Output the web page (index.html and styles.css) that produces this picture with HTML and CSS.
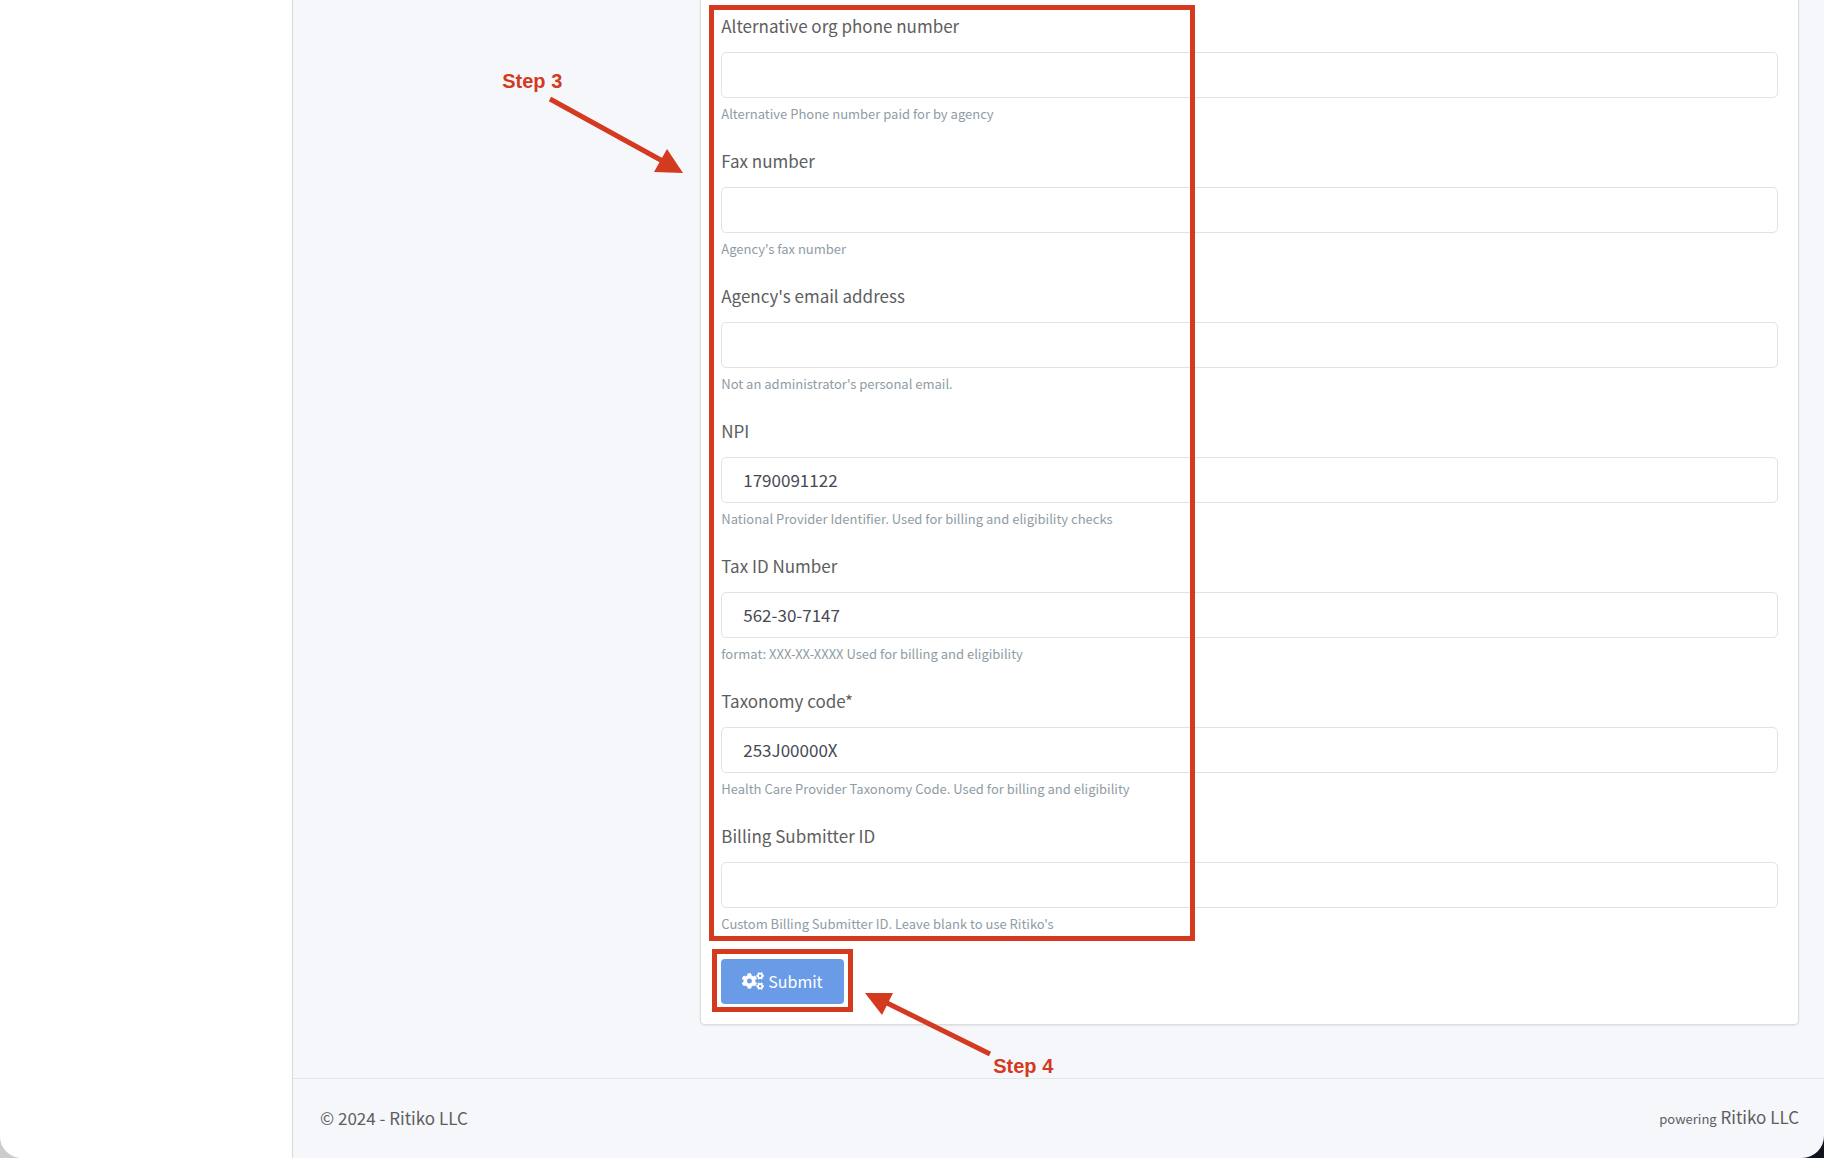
FILE: index.html
```html
<!DOCTYPE html>
<html lang="en">
  <head>
    <meta charset="UTF-8" />
    <meta name="viewport" content="width=device-width, initial-scale=1.0" />
    <title>Agency settings</title>
    <link rel="stylesheet" href="styles.css">
  </head>
  <body>
    <div class="page">
      <aside class="sidebar"></aside>

      <div class="content">
        <main class="main">
          <form class="card">
            <div class="field">
              <label for="altPhone">Alternative org phone number</label>
              <input type="text" id="altPhone" />
              <small>Alternative Phone number paid for by agency</small>
            </div>

            <div class="field">
              <label for="fax">Fax number</label>
              <input type="text" id="fax" />
              <small>Agency's fax number</small>
            </div>

            <div class="field">
              <label for="email">Agency's email address</label>
              <input type="text" id="email" />
              <small>Not an administrator's personal email.</small>
            </div>

            <div class="field">
              <label for="npi">NPI</label>
              <input type="text" id="npi" value="1790091122" />
              <small>National Provider Identifier. Used for billing and eligibility checks</small>
            </div>

            <div class="field">
              <label for="taxId">Tax ID Number</label>
              <input type="text" id="taxId" value="562-30-7147" />
              <small>format: XXX-XX-XXXX Used for billing and eligibility</small>
            </div>

            <div class="field">
              <label for="taxonomy">Taxonomy code*</label>
              <input type="text" id="taxonomy" value="253J00000X" />
              <small>Health Care Provider Taxonomy Code. Used for billing and eligibility</small>
            </div>

            <div class="field">
              <label for="submitter">Billing Submitter ID</label>
              <input type="text" id="submitter" />
              <small>Custom Billing Submitter ID. Leave blank to use Ritiko's</small>
            </div>

            <button type="submit" class="submit">
              <svg class="icon" viewBox="0 0 640 512" aria-hidden="true">
                <defs>
                  <path id="smallCog" d="M512.1 191l-8.2 14.3c-3 5.3-9.4 7.5-15.1 5.4-11.8-4.4-22.6-10.7-32.1-18.6-4.6-3.8-5.8-10.5-2.8-15.7l8.2-14.3c-6.9-8-12.3-17.3-15.9-27.4h-16.5c-6 0-11.2-4.3-12.2-10.3-2-12-2.1-24.6 0-37.1 1-6 6.2-10.4 12.2-10.4h16.5c3.6-10.1 9-19.4 15.9-27.4l-8.2-14.3c-3-5.2-1.9-11.9 2.8-15.7 9.5-7.9 20.4-14.2 32.1-18.6 5.7-2.1 12.1.1 15.1 5.4l8.2 14.3c10.5-1.9 21.2-1.9 31.7 0L552 6.3c3-5.3 9.4-7.5 15.1-5.4 11.8 4.4 22.6 10.7 32.1 18.6 4.6 3.8 5.8 10.5 2.8 15.7l-8.2 14.3c6.9 8 12.3 17.3 15.9 27.4h16.5c6 0 11.2 4.3 12.2 10.3 2 12 2.1 24.6 0 37.1-1 6-6.2 10.4-12.2 10.4h-16.5c-3.6 10.1-9 19.4-15.9 27.4l8.2 14.3c3 5.2 1.9 11.9-2.8 15.7-9.5 7.9-20.4 14.2-32.1 18.6-5.7 2.1-12.1-.1-15.1-5.4l-8.2-14.3c-10.4 1.9-21.2 1.9-31.7 0zm-10.5-58.8c38.5 29.6 82.4-14.3 52.8-52.8-38.5-29.7-82.4 14.3-52.8 52.8z" />
                </defs>
                <use href="#smallCog" />
                <use href="#smallCog" y="300" />
                <path d="M386.3 286.1l33.7 16.8c10.1 5.8 14.5 18.1 10.5 29.1-8.9 24.2-26.4 46.4-42.6 65.8-7.4 8.9-20.2 11.1-30.3 5.3l-29.1-16.8c-16 13.7-34.6 24.6-54.9 31.7v33.6c0 11.6-8.3 21.6-19.7 23.6-24.6 4.2-50.4 4.4-75.9 0-11.5-2-20-11.9-20-23.6V418c-20.3-7.2-38.9-18-54.9-31.7L74 403c-10 5.8-22.9 3.6-30.3-5.3-16.2-19.4-33.3-41.6-42.2-65.7-4-10.9.4-23.2 10.5-29.1l33.3-16.8c-3.9-20.9-3.9-42.4 0-63.4L12 205.8c-10.1-5.8-14.6-18.1-10.5-29 8.9-24.2 26-46.4 42.2-65.8 7.4-8.9 20.2-11.1 30.3-5.3l29.1 16.8c16-13.7 34.6-24.6 54.9-31.7V57.1c0-11.5 8.2-21.5 19.6-23.5 24.6-4.2 50.5-4.4 76-.1 11.5 2 20 11.9 20 23.6v33.6c20.3 7.2 38.9 18 54.9 31.7l29.1-16.8c10-5.8 22.9-3.6 30.3 5.3 16.2 19.4 33.2 41.6 42.1 65.8 4 10.9.1 23.2-10 29.1l-33.7 16.8c3.9 21 3.9 42.5 0 63.5zm-117.6 21.1c59.2-77-28.7-164.9-105.7-105.7-59.2 77 28.7 164.9 105.7 105.7z" />
              </svg>
              Submit
            </button>

            <!-- step annotations drawn over the form -->
            <div class="mark mark-fields"></div>
            <div class="mark mark-submit"></div>

            <span class="step step-three">Step 3</span>
            <svg class="arrow arrow-three" viewBox="0 0 136 80" aria-hidden="true">
              <path class="line" d="M2 4L120 69" />
              <path class="head" d="M135 78L119 54L106 77z" />
            </svg>

            <span class="step step-four">Step 4</span>
            <svg class="arrow arrow-four" viewBox="0 0 128 66" aria-hidden="true">
              <path class="line" d="M125 62L20 10" />
              <path class="head" d="M0 1L28 1L17 23z" />
            </svg>
          </form>
        </main>

        <footer class="footer">
          <span>© 2024 - Ritiko LLC</span>
          <span><small>powering</small> Ritiko LLC</span>
        </footer>
      </div>
    </div>
  </body>
</html>
```

FILE: styles.css
```css
* {
  box-sizing: border-box;
}

html {
  background: linear-gradient(to right, #cccccc 50%, #10131f 50%);
}

body {
  margin: 0;
  font-family: "Noto Sans CJK SC", "Open Sans", sans-serif;
  font-size: 17px;
  line-height: 24px;
  color: #5e5e5e;
}

.page {
  display: flex;
  min-height: 100vh;
  overflow: hidden;
  border-radius: 0 0 22px 22px;
  background-color: #f6f7fb;
}

.sidebar {
  flex: 0 0 293px;
  border-right: 1px solid #d8d9db;
  background-color: #fff;
}

.content {
  display: flex;
  flex: 1;
  flex-direction: column;
  min-width: 0;
}

.main {
  display: grid;
  flex: 1;
  grid-template-columns: 1fr 3fr;
  gap: 14px;
  align-items: start;
  padding: 0 25px 53px 27px;
}

.card {
  position: relative;
  grid-column: 2;
  padding: 14px 20px 20px;
  border: 1px solid #dcdddf;
  border-top: 0;
  border-radius: 0 0 5px 5px;
  background-color: #fff;
  box-shadow: 0 1px 2px rgba(0, 0, 0, 0.08);
}

.field {
  display: flex;
  flex-direction: column;
  margin-bottom: 25px;
}

.field label {
  margin-bottom: 14px;
}

.field input {
  width: 100%;
  height: 46px;
  padding: 0 21px 2px;
  border: 1px solid #dde4e6;
  border-radius: 5px;
  background-color: #fff;
  font: inherit;
  color: #464a53;
}

.field small {
  margin-top: 6px;
  font-size: 13px;
  line-height: 20px;
  color: #909ca5;
}

.submit {
  display: flex;
  align-items: center;
  gap: 4px;
  height: 45px;
  padding: 0 21px 2px;
  border: 0;
  border-radius: 4px;
  background-color: #699be6;
  font: inherit;
  font-size: 16px;
  color: #fff;
  cursor: pointer;
}

.icon {
  width: 22px;
  height: 18px;
  fill: #fff;
}

.mark {
  position: absolute;
  border: 5px solid #d33a20;
  pointer-events: none;
}

.mark-fields {
  top: 5px;
  left: 8px;
  width: 486px;
  height: 936px;
}

.mark-submit {
  top: 949px;
  left: 11px;
  width: 141px;
  height: 63px;
}

.step {
  position: absolute;
  font-family: "Liberation Sans", Arial, sans-serif;
  font-size: 20px;
  font-weight: bold;
  white-space: nowrap;
  color: #d33a20;
}

.step-three {
  top: 69px;
  left: -199px;
}

.step-four {
  top: 1054px;
  left: 292px;
}

.arrow {
  position: absolute;
  pointer-events: none;
}

.arrow-three {
  top: 95px;
  left: -153px;
  width: 136px;
  height: 80px;
}

.arrow-four {
  top: 992px;
  left: 164px;
  width: 128px;
  height: 66px;
}

.arrow .line {
  fill: none;
  stroke: #d33a20;
  stroke-width: 5;
}

.arrow .head {
  fill: #d33a20;
}

.footer {
  display: flex;
  align-items: center;
  justify-content: space-between;
  height: 80px;
  padding: 0 25px 2px 27px;
  border-top: 1px solid #e2e5ea;
}

.footer small {
  font-size: 13px;
}
```
